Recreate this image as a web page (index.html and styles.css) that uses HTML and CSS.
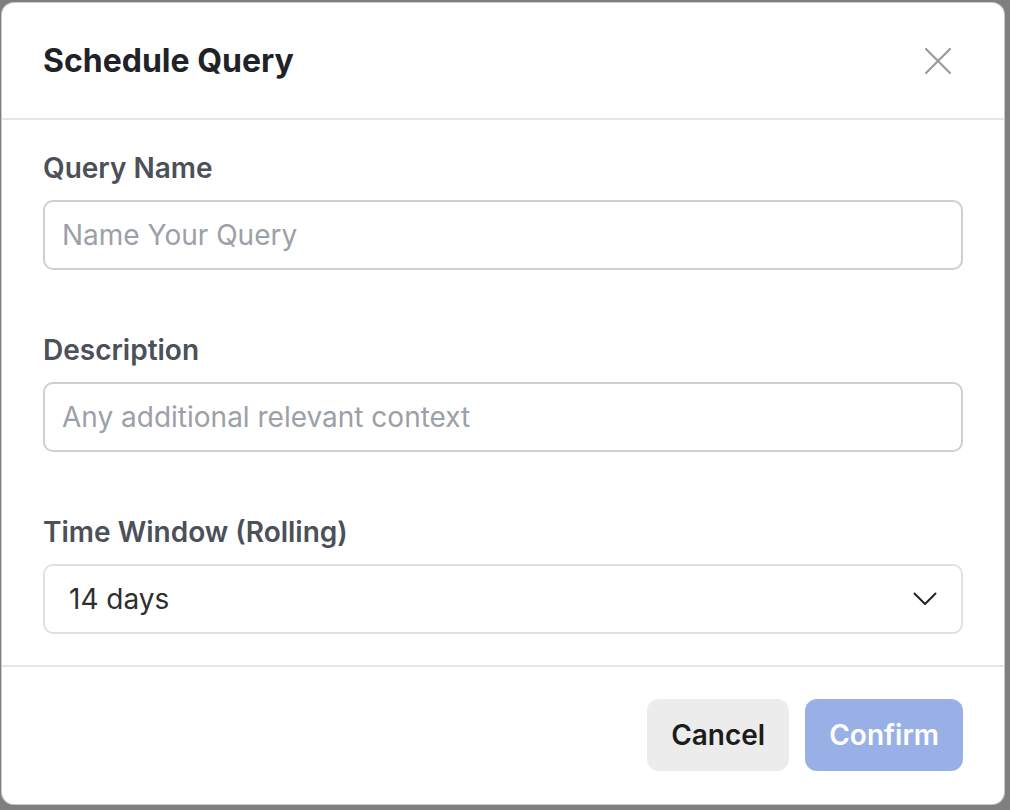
FILE: index.html
```html
<!DOCTYPE html>
<html lang="en">
<head>
    <meta charset="UTF-8">
    <meta name="viewport" content="width=device-width, initial-scale=1.0">
    <title>Schedule Query</title>
    <link rel="stylesheet" href="styles.css">
</head>
<body>
    <div class="backdrop">
        <div class="modal">
            <div class="modal-header">
                <h2 class="modal-title">Schedule Query</h2>
                <button class="close-button" aria-label="Close">
                    <svg width="28" height="28" viewBox="0 0 28 28">
                        <path d="M2 2L26 26M26 2L2 26" stroke="#9a9a9a" stroke-width="2.2" stroke-linecap="round" fill="none"/>
                    </svg>
                </button>
            </div>

            <div class="modal-body">
                <div class="field">
                    <label class="label" for="queryName">Query Name</label>
                    <input id="queryName" class="text-input" type="text" placeholder="Name Your Query">
                </div>

                <div class="field">
                    <label class="label" for="description">Description</label>
                    <input id="description" class="text-input" type="text" placeholder="Any additional relevant context">
                </div>

                <div class="field">
                    <span class="label">Time Window (Rolling)</span>
                    <div class="select-box">
                        <span class="select-value">14 days</span>
                        <svg width="24" height="14" viewBox="0 0 24 14">
                            <path d="M1.5 1.5L12 12L22.5 1.5" stroke="#222" stroke-width="2" stroke-linecap="round" stroke-linejoin="round" fill="none"/>
                        </svg>
                    </div>
                </div>
            </div>

            <div class="modal-footer">
                <button class="btn btn-cancel">Cancel</button>
                <button class="btn btn-confirm" disabled>Confirm</button>
            </div>
        </div>
    </div>
</body>
</html>
```

FILE: styles.css
```css
* {
    box-sizing: border-box;
}
body {
    margin: 0;
    background-color: #7f7f7f;
    font-family: Inter, "Liberation Sans", sans-serif;
}
.backdrop {
    width: 1010px;
    height: 810px;
    padding: 3px 6px 6px 2px;
}
.modal {
    display: flex;
    flex-direction: column;
    height: 801px;
    background-color: #fff;
    border-radius: 12px;
    box-shadow: 0 0 0 1px #c9cacd;
    overflow: hidden;
}
.modal-header {
    display: flex;
    align-items: center;
    justify-content: space-between;
    height: 117px;
    padding: 0 42px 0 41px;
    border-bottom: 2px solid #e6e6e6;
}
.modal-title {
    margin: 0;
    font-size: 32px;
    font-weight: 700;
    color: #1f2328;
}
.close-button {
    display: flex;
    padding: 0;
    margin-right: 10px;
    border: none;
    background: none;
    cursor: pointer;
}
.modal-body {
    display: flex;
    flex-direction: column;
    gap: 64px;
    padding: 32px 41px 31px 41px;
    border-bottom: 2px solid #e6e6e6;
}
.field {
    display: flex;
    flex-direction: column;
    gap: 16px;
}
.label {
    font-size: 28px;
    line-height: 32px;
    font-weight: 600;
    color: #4b5059;
}
.text-input {
    height: 70px;
    padding: 0 17px;
    border: 2px solid #cfcfcf;
    border-radius: 10px;
    font-family: inherit;
    font-size: 28px;
    color: #333;
    outline: none;
}
.text-input::placeholder {
    color: #9ca0a8;
}
.select-box {
    display: flex;
    align-items: center;
    justify-content: space-between;
    height: 70px;
    padding: 0 24px 0 24px;
    border: 2px solid #dfe1e5;
    border-radius: 10px;
}
.select-value {
    font-size: 28px;
    color: #2e2e2e;
}
.modal-footer {
    display: flex;
    justify-content: flex-end;
    gap: 16px;
    padding: 32px 41px 0 41px;
}
.btn {
    height: 72px;
    padding: 0 24px;
    border: none;
    border-radius: 12px;
    font-family: inherit;
    font-size: 28px;
    font-weight: 600;
    cursor: pointer;
}
.btn-cancel {
    background-color: #ececec;
    color: #1c1c1c;
}
.btn-confirm {
    background-color: #98b0e6;
    color: #fff;
}
```
